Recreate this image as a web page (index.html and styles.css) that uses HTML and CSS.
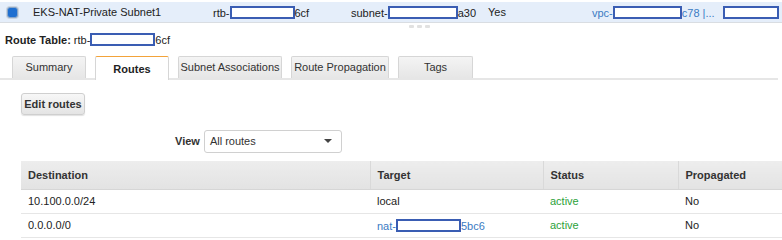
FILE: index.html
```html
<!DOCTYPE html>
<html lang="en">
<head>
    <meta charset="UTF-8">
    <title>Route Tables</title>
    <link rel="stylesheet" href="styles.css">
</head>
<body>
    <div class="selected-row">
        <span class="cell cell-check"><span class="check"></span></span>
        <span class="cell cell-name">EKS-NAT-Private Subnet1</span>
        <span class="cell cell-rtb">rtb-<span class="redact w64"></span>6cf</span>
        <span class="cell cell-subnet">subnet-<span class="redact w70"></span>a30</span>
        <span class="cell cell-main">Yes</span>
        <span class="cell cell-vpc link">vpc-<span class="redact w68"></span>c78 |...</span>
        <span class="cell cell-owner"><span class="redact w56"></span></span>
    </div>
    <div class="handle"><span></span><span></span><span></span></div>

    <p class="detail-title"><b>Route Table:</b> rtb-<span class="redact w64"></span>6cf</p>

    <div class="tabs">
        <div class="tab">Summary</div>
        <div class="tab active">Routes</div>
        <div class="tab wide">Subnet Associations</div>
        <div class="tab mid">Route Propagation</div>
        <div class="tab last">Tags</div>
    </div>

    <div class="toolbar">
        <button class="btn">Edit routes</button>
    </div>

    <div class="filter">
        <label>View</label>
        <div class="select">All routes<span class="caret"></span></div>
    </div>

    <table class="routes">
        <tr>
            <th class="c-dest">Destination</th>
            <th class="c-target">Target</th>
            <th class="c-status">Status</th>
            <th class="c-prop">Propagated</th>
        </tr>
        <tr>
            <td>10.100.0.0/24</td>
            <td>local</td>
            <td class="ok">active</td>
            <td>No</td>
        </tr>
        <tr>
            <td>0.0.0.0/0</td>
            <td class="link">nat-<span class="redact w64"></span>5bc6</td>
            <td class="ok">active</td>
            <td>No</td>
        </tr>
    </table>
</body>
</html>
```

FILE: styles.css
```css
* {
    box-sizing: border-box;
    margin: 0;
    padding: 0;
}

body {
    font-family: "Liberation Sans", Arial, sans-serif;
    font-size: 11px;
    color: #222;
    background: #fff;
    width: 782px;
    height: 240px;
    overflow: hidden;
}

.link {
    color: #3b7bc3;
}

.redact {
    display: inline-block;
    height: 13px;
    border: 2px solid #3a5db3;
    background: #fff;
    vertical-align: -2px;
}

.w56 { width: 56px; }
.w64 { width: 65px; }
.w68 { width: 69px; }
.w70 { width: 70px; }

/* selected row of the list above */
.selected-row {
    margin-top: 2px;
    height: 21px;
    background: #e5eefa;
    border-bottom: 1px solid #d9dde2;
    display: flex;
    align-items: center;
    white-space: nowrap;
    overflow: hidden;
}

.cell {
    flex: none;
}

.cell-check { width: 33px; padding-left: 7px; display: flex; }
.cell-name { width: 180px; }
.cell-rtb { width: 138px; }
.cell-subnet { width: 137px; }
.cell-main { width: 104px; }
.cell-vpc { width: 131px; }

.check {
    width: 11px;
    height: 11px;
    border-radius: 3px;
    background: #1f6fd0;
    border: 1px solid #8aa6c8;
    box-shadow: 0 0 0 1px #c9d3df;
}

.handle {
    height: 9px;
    display: flex;
    gap: 3px;
    padding-left: 409px;
    padding-top: 2px;
}

.handle span {
    width: 5px;
    height: 3px;
    border-radius: 1px;
    background: #e1e1e1;
}

.detail-title {
    padding: 1px 0 0 5px;
    height: 24px;
}

.detail-title b {
    font-weight: bold;
}

/* tabs */
.tabs {
    display: flex;
    gap: 9px;
    padding-left: 12px;
    margin-right: 4px;
    border-bottom: 2px solid #e6e6e6;
    height: 24px;
    align-items: flex-end;
}

.tab {
    width: 74px;
    height: 22px;
    line-height: 21px;
    text-align: center;
    background: linear-gradient(#f4f4f4, #e6e6e6);
    border: 1px solid #d6d6d6;
    border-bottom: none;
    border-radius: 2px 2px 0 0;
    color: #333;
}

.tab.wide { width: 104px; }
.tab.mid { width: 98px; }
.tab.last { width: 75px; }

.tab.active {
    background: #fff;
    border-top: 1px solid #f3a33a;
    font-weight: bold;
    color: #222;
    height: 24px;
    line-height: 24px;
    margin-bottom: -2px;
}

.toolbar {
    padding: 13px 0 0 21px;
    height: 50px;
}

.btn {
    font-family: inherit;
    font-size: 11px;
    font-weight: bold;
    color: #333;
    width: 64px;
    height: 22px;
    border: 1px solid #cfcfcf;
    border-radius: 3px;
    background: linear-gradient(#f7f7f7, #e4e4e4);
    box-shadow: 0 1px 1px rgba(0, 0, 0, 0.12);
}

.filter {
    display: flex;
    align-items: center;
    padding-left: 175px;
    gap: 4px;
    height: 31px;
    padding-bottom: 9px;
}

.filter label {
    font-weight: bold;
    color: #333;
}

.select {
    width: 138px;
    height: 23px;
    border: 1px solid #d0d0d0;
    border-radius: 3px;
    padding-left: 5px;
    display: flex;
    align-items: center;
    justify-content: space-between;
    padding-right: 9px;
    color: #333;
}

.caret {
    width: 0;
    height: 0;
    border-left: 4px solid transparent;
    border-right: 4px solid transparent;
    border-top: 4px solid #444;
}

/* routes table */
.routes {
    margin-left: 21px;
    width: 761px;
    border-collapse: collapse;
}

.routes th {
    height: 28px;
    text-align: left;
    font-weight: bold;
    color: #333;
    padding-left: 7px;
    background: linear-gradient(#ededed, #e3e3e3);
    border-bottom: 1px solid #d6d6d6;
}

.routes th + th {
    border-left: 1px solid #d9d9d9;
}

.routes td {
    height: 24px;
    padding-left: 7px;
    border-bottom: 1px solid #e6e6e6;
}

.c-dest { width: 349px; }
.c-target { width: 173px; }
.c-status { width: 135px; }

.ok {
    color: #2ca23a;
}
```
